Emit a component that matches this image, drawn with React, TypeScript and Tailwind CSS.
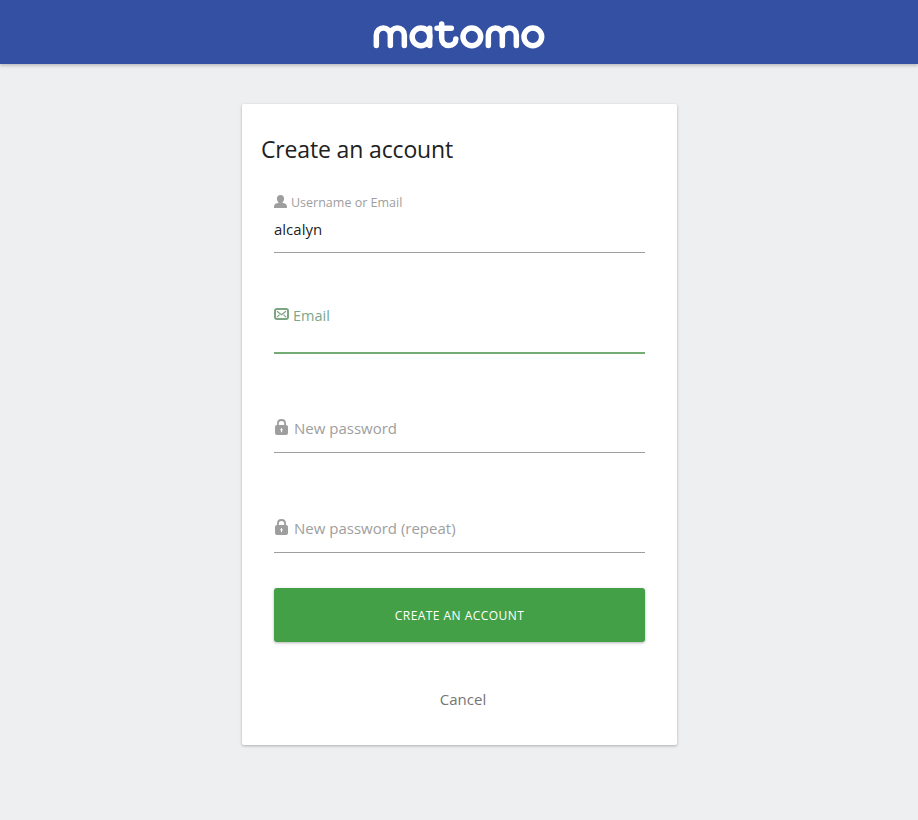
import type { ReactNode } from 'react';

function Logo() {
  return (
    <svg
      className="h-[28px] w-[172px]"
      viewBox="29 32 516 84"
      fill="none"
      stroke="#fff"
      strokeWidth="16.5"
      strokeLinecap="round"
      strokeLinejoin="round"
      aria-label="matomo"
    >
      <path d="M39 105.500V74a21 21 0 0 1 42 0v31.500M81 74a21 21 0 0 1 42 0v31.500" />
      <circle cx="173" cy="79.500" r="26.500" />
      <path d="M199 54v51.500" />
      <path d="M235 41v42c0 14 9 22.500 21.500 22.500S277.500 97 277.500 86M221 54h43" />
      <circle cx="325.500" cy="79.500" r="26.500" />
      <path d="M375 105.500V74a21 21 0 0 1 42 0v31.500M417 74a21 21 0 0 1 42 0v31.500" />
      <circle cx="508.500" cy="79.500" r="26.500" />
    </svg>
  );
}

function UserIcon() {
  return (
    <svg className="-mt-0.5 h-[13px] w-[13px]" viewBox="0 0 13 13" fill="currentColor">
      <path d="M6.500 0C4.200 0 2.900 1.500 2.900 3.600c0 1.900.8 3.500 1.900 4.200C2 8.200.3 9.300.1 11L0 13h13l-.1-2c-.2-1.700-1.900-2.800-4.700-3.200 1.100-.7 1.900-2.300 1.900-4.200C10.100 1.500 8.800 0 6.500 0Z" />
    </svg>
  );
}

function MailIcon() {
  return (
    <svg className="-mt-px h-[12px] w-[15px]" viewBox="0 0 15 12" fill="none" stroke="currentColor">
      <rect x="1" y="1" width="13" height="10" rx="2" strokeWidth="2" />
      <path d="M3 3.300l4.500 3.500L12 3.300M3 9.200l2.500-2.500M12 9.200L9.500 6.700" strokeWidth="1.200" />
    </svg>
  );
}

function LockIcon() {
  return (
    <svg className="h-[16px] w-[13px]" viewBox="0 0 13 16" fill="none">
      <path d="M2.900 7V4.500C2.900 2.300 4.400 1 6.500 1s3.600 1.300 3.600 3.500V7" stroke="currentColor" strokeWidth="1.800" />
      <rect y="6" width="13" height="10" rx="2" fill="currentColor" />
      <path d="M6.500 9.200v4M5.200 10.800h2.600" stroke="#fff" strokeWidth="1" />
    </svg>
  );
}

function PasswordField({ children }: { children: ReactNode }) {
  return (
    <div className="flex h-[100px] flex-col justify-end border-b border-[#9e9e9e] pb-[11px] text-[#9e9e9e]">
      <div className="flex h-[22px] items-start pl-px">
        <LockIcon />
        {children}
      </div>
    </div>
  );
}

export default function App() {
  return (
    <div className="min-h-[820px] bg-[#edeff1] font-['Open_Sans','Noto_Sans',sans-serif]">
      <header className="flex h-16 justify-center bg-[#3450a3] pt-[20.500px] shadow-[0_2px_3px_rgba(0,0,0,0.2)]">
        <Logo />
      </header>
      <main className="ml-[242px] mt-10 h-[641px] w-[435px] rounded-[2px] bg-white px-8 pt-[27px] shadow-[0_1px_3px_rgba(0,0,0,0.28)]">
        <h1 className="-ml-[13px] h-9 whitespace-nowrap text-[23px] leading-9 text-[#212121]">
          <span className="tracking-[-0.15px]">Create an account</span>
        </h1>
        <div className="h-[86px] border-b border-[#9e9e9e] pt-[24px]">
          <div className="flex h-[22px] items-center text-[#9e9e9e]">
            <UserIcon />
            <span className="ml-1 mt-0.5 text-[12.500px] leading-4">Username or Email</span>
          </div>
          <div className="mt-[5px] text-[15px] leading-[22px] text-black/90">
            <span>alcalyn</span>
          </div>
        </div>
        <div className="h-[101px] border-b-2 border-[#73ac75] pt-[56px]">
          <div className="flex items-start text-[#7ba88a]">
            <div className="text-[#7da581]"><MailIcon /></div>
            <span className="-mt-[3px] ml-1 text-[14.500px] leading-5">Email</span>
          </div>
        </div>
        <div className="-mt-px">
          <PasswordField><span className="-mt-px ml-1.5 text-[15px] leading-5">New password</span></PasswordField>
          <PasswordField><span className="-mt-px ml-1.5 text-[15px] leading-5">New password (repeat)</span></PasswordField>
        </div>
        <button className="mt-[35px] flex h-[54px] w-full items-center justify-center rounded-[3px] bg-[#43a047] pt-px text-[12px] tracking-[0.45px] text-white shadow-[0_1px_3px_rgba(0,0,0,0.3)]">
          <span>CREATE AN ACCOUNT</span>
        </button>
        <div className="mt-[46px] pl-[7px] text-center text-[15px] leading-[22px] text-[#757575]">
          <a>Cancel</a>
        </div>
      </main>
    </div>
  );
}
